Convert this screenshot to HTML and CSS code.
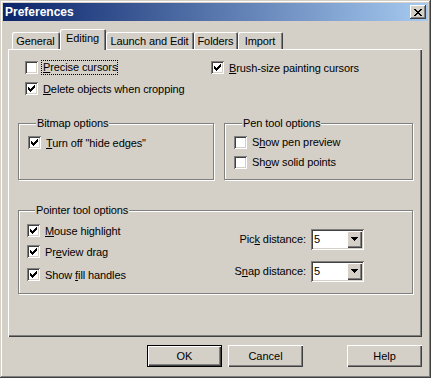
FILE: index.html
```html
<!DOCTYPE html>
<html lang="en">
<head>
    <meta charset="UTF-8">
    <title>Preferences</title>
    <link rel="stylesheet" href="styles.css">
</head>
<body>
    <div class="window">
        <div class="titlebar">
            <span class="title">Preferences</span>
            <button class="close">
                <svg width="8" height="7" viewBox="0 0 8 7"><path d="M0 0h2v1h-2z M6 0h2v1h-2z M1 1h2v1h-2z M5 1h2v1h-2z M2 2h4v1h-4z M3 3h2v1h-2z M2 4h4v1h-4z M1 5h2v1h-2z M5 5h2v1h-2z M0 6h2v1h-2z M6 6h2v1h-2z" fill="#000"/></svg>
            </button>
        </div>

        <div class="dialog">
            <div class="tabs">
                <div class="tab">General</div>
                <div class="tab active">Editing</div>
                <div class="tab">Launch and Edit</div>
                <div class="tab">Folders</div>
                <div class="tab">Import</div>
            </div>

            <div class="panel">
                <div class="top-opts">
                    <div class="col">
                        <label class="check">
                            <span class="box"></span>
                            <span class="focus"><u>P</u>recise cursors</span>
                        </label>
                        <label class="check">
                            <span class="box"><svg width="7" height="7" viewBox="0 0 7 7"><path d="M6 0h1v1h-1z M5 1h2v1h-2z M0 2h1v1h-1z M4 2h3v1h-3z M0 3h2v1h-2z M3 3h3v1h-3z M0 4h5v1h-5z M1 5h3v1h-3z M2 6h1v1h-1z" fill="#000"/></svg></span>
                            <span><u>D</u>elete objects when cropping</span>
                        </label>
                    </div>
                    <div class="col">
                        <label class="check">
                            <span class="box"><svg width="7" height="7" viewBox="0 0 7 7"><path d="M6 0h1v1h-1z M5 1h2v1h-2z M0 2h1v1h-1z M4 2h3v1h-3z M0 3h2v1h-2z M3 3h3v1h-3z M0 4h5v1h-5z M1 5h3v1h-3z M2 6h1v1h-1z" fill="#000"/></svg></span>
                            <span><u>B</u>rush-size painting cursors</span>
                        </label>
                    </div>
                </div>

                <div class="groups">
                    <fieldset class="group bitmap">
                        <legend>Bitmap options</legend>
                        <label class="check">
                            <span class="box"><svg width="7" height="7" viewBox="0 0 7 7"><path d="M6 0h1v1h-1z M5 1h2v1h-2z M0 2h1v1h-1z M4 2h3v1h-3z M0 3h2v1h-2z M3 3h3v1h-3z M0 4h5v1h-5z M1 5h3v1h-3z M2 6h1v1h-1z" fill="#000"/></svg></span>
                            <span><u>T</u>urn off "hide edges"</span>
                        </label>
                    </fieldset>

                    <fieldset class="group pen">
                        <legend>Pen tool options</legend>
                        <label class="check short">
                            <span class="box"></span>
                            <span>S<u>h</u>ow pen preview</span>
                        </label>
                        <label class="check short">
                            <span class="box"></span>
                            <span>Sh<u>o</u>w solid points</span>
                        </label>
                    </fieldset>
                </div>

                <fieldset class="group pointer">
                    <legend>Pointer tool options</legend>
                    <div class="pointer-body">
                        <div class="col">
                            <label class="check">
                                <span class="box"><svg width="7" height="7" viewBox="0 0 7 7"><path d="M6 0h1v1h-1z M5 1h2v1h-2z M0 2h1v1h-1z M4 2h3v1h-3z M0 3h2v1h-2z M3 3h3v1h-3z M0 4h5v1h-5z M1 5h3v1h-3z M2 6h1v1h-1z" fill="#000"/></svg></span>
                                <span><u>M</u>ouse highlight</span>
                            </label>
                            <label class="check">
                                <span class="box"><svg width="7" height="7" viewBox="0 0 7 7"><path d="M6 0h1v1h-1z M5 1h2v1h-2z M0 2h1v1h-1z M4 2h3v1h-3z M0 3h2v1h-2z M3 3h3v1h-3z M0 4h5v1h-5z M1 5h3v1h-3z M2 6h1v1h-1z" fill="#000"/></svg></span>
                                <span>Pr<u>e</u>view drag</span>
                            </label>
                            <label class="check last">
                                <span class="box"><svg width="7" height="7" viewBox="0 0 7 7"><path d="M6 0h1v1h-1z M5 1h2v1h-2z M0 2h1v1h-1z M4 2h3v1h-3z M0 3h2v1h-2z M3 3h3v1h-3z M0 4h5v1h-5z M1 5h3v1h-3z M2 6h1v1h-1z" fill="#000"/></svg></span>
                                <span>Show <u>f</u>ill handles</span>
                            </label>
                        </div>
                        <div class="distances">
                            <span class="dist-label">Pic<u>k</u> distance:</span>
                            <div class="combo">
                                <span class="combo-value">5</span>
                                <span class="combo-btn"><svg width="7" height="4" viewBox="0 0 7 4"><path d="M0 0h7v1h-7z M1 1h5v1h-5z M2 2h3v1h-3z M3 3h1v1h-1z" fill="#000"/></svg></span>
                            </div>
                            <span class="dist-label">S<u>n</u>ap distance:</span>
                            <div class="combo">
                                <span class="combo-value">5</span>
                                <span class="combo-btn"><svg width="7" height="4" viewBox="0 0 7 4"><path d="M0 0h7v1h-7z M1 1h5v1h-5z M2 2h3v1h-3z M3 3h1v1h-1z" fill="#000"/></svg></span>
                            </div>
                        </div>
                    </div>
                </fieldset>
            </div>

            <div class="buttons">
                <button class="btn default">OK</button>
                <button class="btn">Cancel</button>
                <button class="btn help">Help</button>
            </div>
        </div>
    </div>
</body>
</html>
```

FILE: styles.css
```css
* {
    margin: 0;
    padding: 0;
    box-sizing: border-box;
}

body {
    background-color: #d4d0c8;
    font-family: "Liberation Sans", Arial, sans-serif;
    font-size: 11px;
    letter-spacing: -0.1px;
    color: #000;
}

.window {
    width: 431px;
    height: 378px;
    padding: 3px;
    background-color: #d4d0c8;
    display: flex;
    flex-direction: column;
    box-shadow: inset -1px -1px #404040, inset 1px 1px #d4d0c8,
                inset -2px -2px #808080, inset 2px 2px #fff;
}

.titlebar {
    height: 18px;
    display: flex;
    align-items: center;
    justify-content: space-between;
    padding: 0 2px;
    background: linear-gradient(to right, #0a246a, #a6caf0);
    color: #fff;
    font-size: 12px;
    font-weight: bold;
    letter-spacing: 0;
}

.close {
    width: 16px;
    height: 14px;
    border: none;
    background-color: #d4d0c8;
    display: flex;
    align-items: center;
    justify-content: center;
    box-shadow: inset -1px -1px #404040, inset 1px 1px #fff, inset -2px -2px #808080;
}

.dialog {
    flex: 1;
    padding: 8px 6px 0 5px;
    display: flex;
    flex-direction: column;
}

/* tabs */
.tabs {
    display: flex;
    align-items: flex-end;
    height: 20px;
    padding-left: 4px;
}

.tab {
    height: 17px;
    padding: 0 1px 0 0;
    display: flex;
    align-items: center;
    justify-content: center;
    white-space: nowrap;
    border-radius: 2px 2px 0 0;
    box-shadow: inset 1px 1px #fff, inset -1px 0 #404040, inset -2px 0 #808080;
}

.tab:nth-child(1) { width: 48px; }
.tab:nth-child(2) { width: 46px; }
.tab:nth-child(3) { width: 88px; }
.tab:nth-child(4) { width: 44px; }
.tab:nth-child(5) { width: 45px; }

.tab.active {
    height: 21px;
    margin-bottom: -1px;
    padding-bottom: 3px;
    background-color: #d4d0c8;
    z-index: 1;
}

/* panel */
.panel {
    height: 288px;
    padding: 8px 0 0 10px;
    display: flex;
    flex-direction: column;
    box-shadow: inset 1px 1px #fff, inset -1px -1px #404040, inset -2px -2px #808080;
}

.top-opts {
    display: grid;
    grid-template-columns: 186px 1fr;
    padding-left: 7px;
}

.check {
    height: 21px;
    display: flex;
    align-items: center;
    gap: 5px;
    white-space: nowrap;
}

.check.short {
    height: 20px;
}

.box {
    width: 13px;
    height: 13px;
    flex: none;
    background-color: #fff;
    display: flex;
    align-items: center;
    justify-content: center;
    box-shadow: inset 1px 1px #808080, inset -1px -1px #fff,
                inset 2px 2px #404040, inset -2px -2px #d4d0c8;
}

.box svg {
    display: block;
}

.focus {
    outline: 1px dotted #000;
    margin-left: -1px;
    padding: 0 0 1px 1px;
}

/* group boxes */
.group {
    border: 1px solid #808080;
    box-shadow: inset 1px 1px #fff, 1px 1px #fff;
}

.group legend {
    margin-left: 8px;
    padding: 0 1px;
    line-height: 13px;
    background-color: #d4d0c8;
}

.groups {
    display: flex;
    gap: 10px;
    margin-top: 18px;
}

.bitmap {
    width: 196px;
    height: 63px;
    padding: 2px 0 0 9px;
}

.pen {
    width: 189px;
    height: 63px;
    padding: 2px 0 0 9px;
}

.pointer {
    width: 395px;
    height: 90px;
    margin-top: 24px;
    padding: 3px 48px 0 8px;
}

.pointer-body {
    display: flex;
    justify-content: space-between;
}

.check.last {
    margin-top: 2px;
}

.distances {
    display: grid;
    grid-template-columns: auto auto;
    align-items: center;
    column-gap: 5px;
    row-gap: 4px;
    margin-top: 5px;
}

.dist-label {
    text-align: right;
}

.combo {
    width: 53px;
    height: 21px;
    padding: 2px;
    display: flex;
    background-color: #fff;
    box-shadow: inset 1px 1px #808080, inset -1px -1px #fff,
                inset 2px 2px #404040, inset -2px -2px #d4d0c8;
}

.combo-value {
    flex: 1;
    padding-left: 1px;
    line-height: 17px;
}

.combo-btn {
    width: 15px;
    background-color: #d4d0c8;
    display: flex;
    align-items: center;
    justify-content: center;
    box-shadow: inset 1px 1px #fff, inset -1px -1px #404040, inset -2px -2px #808080;
}

/* buttons */
.buttons {
    display: flex;
    justify-content: flex-end;
    gap: 6px;
    margin-top: 8px;
}

.btn {
    width: 75px;
    height: 22px;
    border: none;
    background-color: #d4d0c8;
    font-family: "Liberation Sans", Arial, sans-serif;
    font-size: 11px;
    color: #000;
    box-shadow: inset 1px 1px #fff, inset -1px -1px #404040, inset -2px -2px #808080;
}

.btn.default {
    border: 1px solid #000;
}

.btn.help {
    margin-left: 38px;
}
```
